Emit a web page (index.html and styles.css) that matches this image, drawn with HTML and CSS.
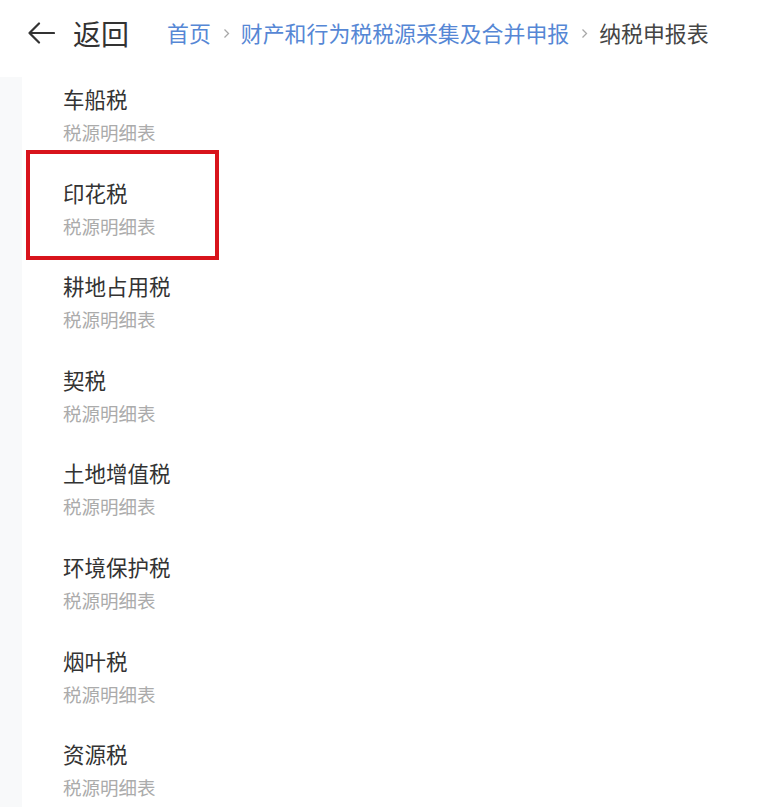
FILE: index.html
```html
<!DOCTYPE html>
<html lang="zh-CN">
<head>
<meta charset="utf-8">
<title>纳税申报表</title>
<link rel="stylesheet" href="styles.css">
</head>
<body>
<header class="topbar">
  <a class="back" href="#">
    <svg class="back-icon" width="28" height="22" viewBox="0 0 28 22" aria-hidden="true">
      <path d="M27 11H2.5M12 1.5L2.5 11l9.5 9.5" fill="none" stroke="#333" stroke-width="2.2" stroke-linecap="round" stroke-linejoin="round"/>
    </svg>
    <span class="back-text">返回</span>
  </a>
  <nav class="crumbs">
    <a class="crumb link" href="#">首页</a>
    <span class="sep"><svg width="7" height="11" viewBox="0 0 7 11"><path d="M1.5 1.5l4 4-4 4" fill="none" stroke="#a8a8a8" stroke-width="1.3"/></svg></span>
    <a class="crumb link" href="#">财产和行为税税源采集及合并申报</a>
    <span class="sep"><svg width="7" height="11" viewBox="0 0 7 11"><path d="M1.5 1.5l4 4-4 4" fill="none" stroke="#a8a8a8" stroke-width="1.3"/></svg></span>
    <span class="crumb current">纳税申报表</span>
  </nav>
</header>
<main class="content">
  <aside class="rail"></aside>
  <ul class="tax-list">
    <li class="tax-item"><div class="tax-name">车船税</div><div class="tax-sub">税源明细表</div></li>
    <li class="tax-item marked"><div class="tax-name">印花税</div><div class="tax-sub">税源明细表</div></li>
    <li class="tax-item"><div class="tax-name">耕地占用税</div><div class="tax-sub">税源明细表</div></li>
    <li class="tax-item"><div class="tax-name">契税</div><div class="tax-sub">税源明细表</div></li>
    <li class="tax-item"><div class="tax-name">土地增值税</div><div class="tax-sub">税源明细表</div></li>
    <li class="tax-item"><div class="tax-name">环境保护税</div><div class="tax-sub">税源明细表</div></li>
    <li class="tax-item"><div class="tax-name">烟叶税</div><div class="tax-sub">税源明细表</div></li>
    <li class="tax-item"><div class="tax-name">资源税</div><div class="tax-sub">税源明细表</div></li>
  </ul>
</main>
</body>
</html>
```

FILE: styles.css
```css
html, body {
  margin: 0;
  padding: 0;
  background: #ffffff;
  height: 807px;
  overflow: hidden;
}
body {
  font-family: "Noto Sans CJK SC", "Noto Sans", sans-serif;
  color: #333;
}
.topbar {
  height: 66px;
  display: flex;
  align-items: center;
  padding-left: 27px;
}
.back {
  display: flex;
  align-items: center;
  gap: 18px;
  text-decoration: none;
  color: #333;
}
.back-icon { display: block; }
.back-text {
  font-size: 28px;
  line-height: 36px;
  color: #333;
}
.crumbs {
  margin-left: 38px;
  display: flex;
  align-items: center;
  font-size: 21.9px;
  line-height: 30px;
}
.crumb { text-decoration: none; }
.crumb.link { color: #5687d5; }
.crumb.current { color: #454545; }
.sep {
  display: flex;
  align-items: center;
  padding: 0 11px 0 12px;
}
.sep svg { display: block; }
.content {
  display: flex;
  margin-top: 11px;
}
.rail {
  width: 22px;
  flex: none;
  background: #f8f9fa;
}
.tax-list {
  list-style: none;
  margin: 0;
  padding: 0;
  flex: 1;
}
.tax-item {
  position: relative;
  height: 93.6px;
  box-sizing: border-box;
  padding: 7px 0 0 41px;
}
.tax-name {
  font-size: 21.5px;
  line-height: 30px;
  color: #333;
}
.tax-sub {
  margin-top: 5px;
  font-size: 18.5px;
  line-height: 26px;
  color: #ababab;
}
.marked::after {
  content: "";
  position: absolute;
  left: 4px;
  top: -20.6px;
  width: 193px;
  height: 110px;
  box-sizing: border-box;
  border: 4px solid #d8141c;
}
```
